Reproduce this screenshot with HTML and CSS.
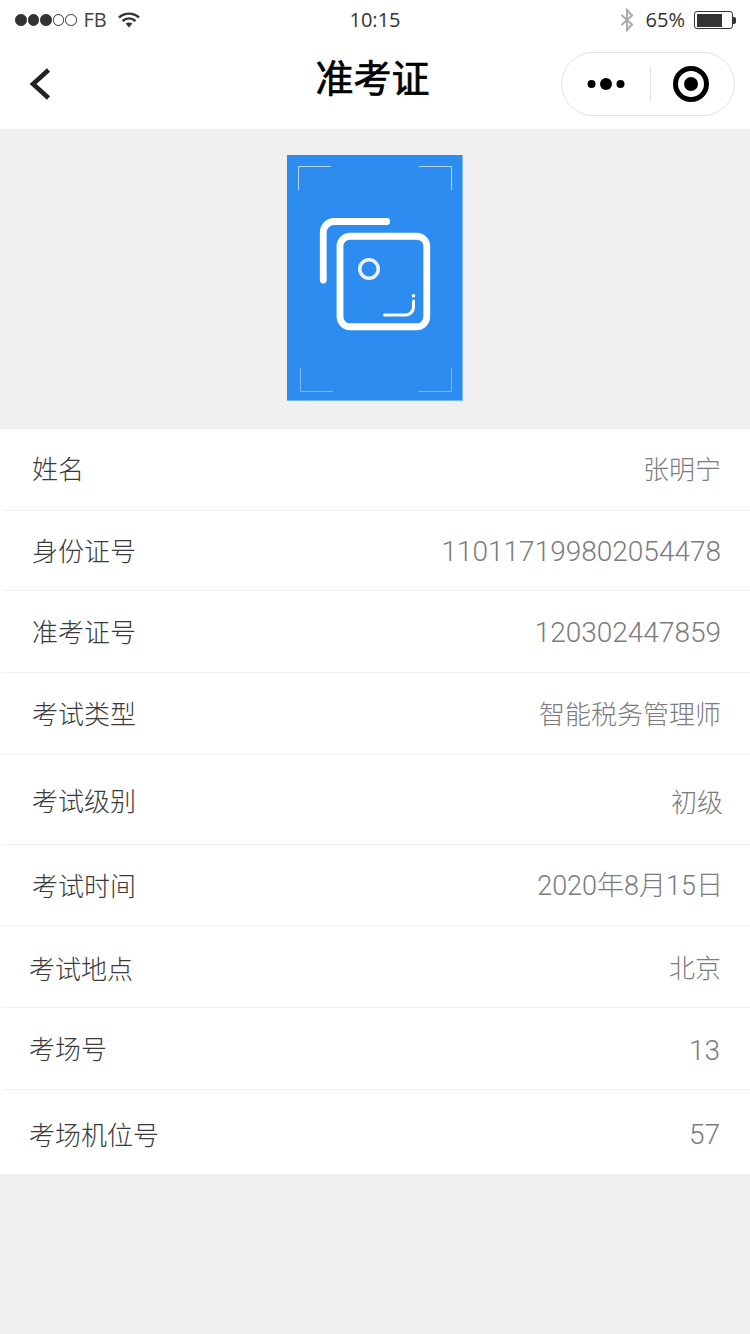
FILE: index.html
```html
<!DOCTYPE html>
<html lang="zh">
<head>
<meta charset="utf-8">
<title>准考证</title>
<link rel="stylesheet" href="styles.css">
</head>
<body>
<header class="top">
  <div class="status">
    <div class="status-left">
      <span class="signal"><i class="dot on"></i><i class="dot on"></i><i class="dot on"></i><i class="dot"></i><i class="dot"></i></span>
      <span class="carrier">FB</span>
      <svg class="wifi" width="22" height="16" viewBox="0 0 22 16"><path d="M1 5.500C6.800 0.300 15.200 0.300 21 5.500" fill="none" stroke="#333" stroke-width="2.400"/><path d="M4.500 9C8.400 5.600 13.600 5.600 17.500 9" fill="none" stroke="#333" stroke-width="2.400"/><path d="M7.600 11.600L11 15.500L14.400 11.600C12.400 10.200 9.600 10.200 7.600 11.600Z" fill="#333"/></svg>
    </div>
    <div class="clock">10:15</div>
    <div class="status-right">
      <svg class="bt" width="14" height="24" viewBox="0 0 14 24"><path d="M1.500 7L12 16.500L7 22V2L12 7.500L1.500 17" fill="none" stroke="#aaa" stroke-width="2"/></svg>
      <span class="pct">65%</span>
      <span class="battery"><span class="battery-fill"></span></span><span class="battery-tip"></span>
    </div>
  </div>
  <div class="nav">
    <svg class="back" width="24" height="36" viewBox="0 0 24 36"><path d="M20.500 4L5 18L20.500 32" fill="none" stroke="#222" stroke-width="4.600"/></svg>
    <h1 class="title">准考证</h1>
    <div class="capsule">
      <svg class="more" width="38" height="14" viewBox="0 0 38 14"><circle cx="4.500" cy="7" r="4" fill="#000"/><circle cx="19" cy="7" r="6" fill="#000"/><circle cx="33.500" cy="7" r="4" fill="#000"/></svg>
      <span class="sep"></span>
      <svg class="target" width="38" height="38" viewBox="0 0 38 38"><circle cx="19" cy="19" r="15.500" fill="none" stroke="#000" stroke-width="5"/><circle cx="19" cy="19" r="7" fill="#000"/></svg>
    </div>
  </div>
</header>

<section class="photo-band">
  <div class="photo">
    <svg width="176" height="246" viewBox="0 0 176 246">
      <g fill="none" stroke="#fff" stroke-width="1">
        <path class="mark-top" d="M11.500 35V11.500H44"/>
        <path class="mark-top" d="M132 11.500H164.500V35"/>
        <path class="mark-bottom" d="M13.500 213V236.500H46"/>
        <path class="mark-bottom" d="M131.500 236.500H164.500V213"/>
      </g>
      <path d="M36.250 125V77.500a11 11 0 0 1 11-11H99.750" fill="none" stroke="#fff" stroke-width="6.800" stroke-linecap="round"/>
      <rect x="53" y="81.250" width="86.750" height="90.500" rx="10" fill="none" stroke="#fff" stroke-width="6.800"/>
      <circle cx="82" cy="114" r="9.250" fill="none" stroke="#f0f0f0" stroke-width="3.500"/>
      <path d="M97.500 160H118.500a8 8 0 0 0 8-8V146" fill="none" stroke="#fff" stroke-width="3" stroke-linecap="round"/>
      <circle cx="126.500" cy="140.700" r="1.800" fill="#fff"/>
    </svg>
  </div>
</section>

<main class="list">
  <div class="row r82"><span class="k up3">姓名</span><span class="v up3">张明宁</span></div>
  <div class="row r80"><span class="k up2">身份证号</span><span class="v num">110117199802054478</span></div>
  <div class="row r82"><span class="k up2">准考证号</span><span class="v num">120302447859</span></div>
  <div class="row r82"><span class="k up2">考试类型</span><span class="v up2">智能税务管理师</span></div>
  <div class="row r90"><span class="k up1">考试级别</span><span class="v far">初级</span></div>
  <div class="row r81"><span class="k up1">考试时间</span><span class="v far mix up2">2020年8月15日</span></div>
  <div class="row r82"><span class="k k30">考试地点</span><span class="v up1">北京</span></div>
  <div class="row r82"><span class="k k30 up2">考场号</span><span class="v num in dn1">13</span></div>
  <div class="row r84 last"><span class="k k30 dn1">考场机位号</span><span class="v num in dn2">57</span></div>
</main>
</body>
</html>
```

FILE: styles.css
```css
* { box-sizing: border-box; }
html, body { margin: 0; padding: 0; }
body {
  width: 750px;
  height: 1334px;
  overflow: hidden;
  background: #f0f0f0;
  font-family: "Noto Sans CJK SC", "Noto Sans", sans-serif;
}
.top { background: #fff; height: 130px; border-bottom: 1px solid #ececec; }
.status {
  height: 40px;
  display: grid;
  grid-template-columns: 1fr auto 1fr;
  align-items: center;
  color: #333;
  font-family: "Open Sans", sans-serif;
  font-size: 20px;
  line-height: 38px;
}
.status-left { display: flex; align-items: center; padding-left: 15px; }
.signal { display: flex; gap: 1px; }
.dot { width: 11.500px; height: 11.500px; border-radius: 50%; border: 1px solid #333; display: block; }
.dot.on { background: #333; }
.carrier { margin-left: 7px; color: #444; }
.wifi { margin-left: 11px; }
.clock { color: #333; }
.status-right { display: flex; align-items: center; justify-content: flex-end; padding-right: 14px; }
.bt { margin-right: 2px; }
.pct { margin-left: 10px; }
.battery { margin-left: 9px; width: 39px; height: 18px; border: 1.500px solid #333; border-radius: 3px; padding: 1.500px; display: block; }
.battery-fill { display: block; width: 25px; height: 100%; background: #333; }
.battery-tip { width: 3px; height: 7px; background: #333; border-radius: 0 2px 2px 0; }
.nav { height: 88px; display: flex; align-items: center; position: relative; padding: 0 15px 0 28px; justify-content: space-between; }
.back { display: block; margin-top: -1px; }
.title {
  position: absolute;
  left: 0; right: 5px; top: 10px;
  margin: 0;
  text-align: center;
  font-size: 38px;
  line-height: 52px;
  font-weight: 400;
  -webkit-text-stroke: 0.7px #000;
  color: #000;
}
.capsule {
  width: 174px;
  height: 64px;
  border: 1px solid #e2e2e2;
  border-radius: 32px;
  display: flex;
  align-items: center;
  padding-left: 25px;
}
.sep { width: 1px; height: 36px; background: #e2e2e2; margin-left: 25px; }
.target { margin-left: 21px; }
.more, .target { display: block; }
.photo-band { height: 299px; padding-top: 25px; display: flex; justify-content: center; }
.photo { width: 176px; height: 246px; background: #2d8cf0; border-right: 1px solid #7db8f5; border-bottom: 1px solid #7db8f5; }
.photo svg { display: block; }
.mark-top { stroke-opacity: .65; }
.mark-bottom { stroke-opacity: .4; }
.list { background: #fff; }
.row { display: flex; justify-content: space-between; align-items: center; padding: 0 29px 0 32px; position: relative; font-size: 26px; font-weight: 300; }
.row::after { content: ""; position: absolute; left: 2px; right: 0; bottom: 0; height: 1px; background: #efefef; }
.row.last::after { display: none; }
.r80 { height: 80px; }
.r81 { height: 81px; }
.r82 { height: 82px; }
.r84 { height: 84px; }
.r90 { height: 90px; }
.k { color: #3a3a3a; }
.k30 { margin-left: -3px; }
.v { color: #7c7c7c; font-family: Roboto, "Noto Sans CJK SC", sans-serif; font-size: 26px; font-weight: 300; }
.num { font-size: 28px; }
.mix { font-size: 27px; }
.far { margin-right: -2px; }
.in { margin-right: 1px; }
.up1 { margin-bottom: 2px; }
.up2 { margin-bottom: 4px; }
.up3 { margin-bottom: 6px; }
.dn1 { margin-top: 2px; }
.dn2 { margin-top: 4px; }
```
